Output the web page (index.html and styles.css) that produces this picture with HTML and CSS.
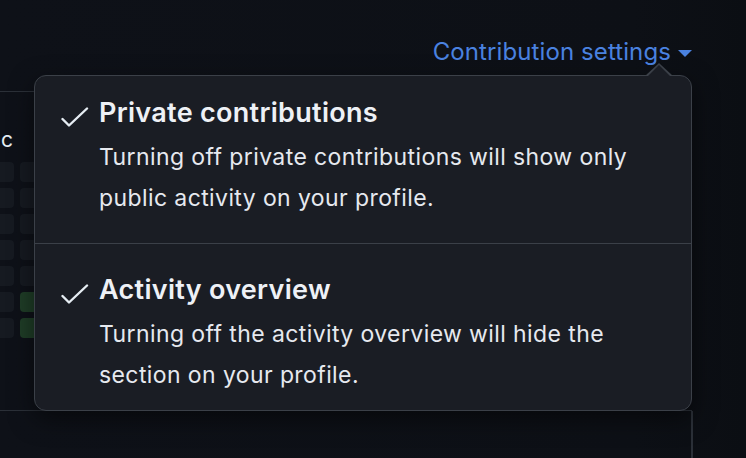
FILE: index.html
```html
<!DOCTYPE html>
<html lang="en">
<head>
<meta charset="utf-8">
<link rel="stylesheet" href="styles.css">
</head>
<body>
<div class="page">
  <div class="toolbar">
    <span class="settings-link">Contribution settings<span class="caret"></span></span>
  </div>
  <div class="graph-card">
    <div class="month">c</div>
    <div class="grid">
      <div class="col">
        <i></i><i></i><i></i><i></i><i></i><i></i><i></i>
      </div>
      <div class="col">
        <i></i><i></i><i></i><i></i><i></i><i class="g"></i><i class="g"></i>
      </div>
    </div>
  </div>
  <div class="next-card"></div>

  <div class="popover">
    <div class="item item-first">
      <svg class="check" viewBox="0 0 28 21" width="28" height="21"><path d="M1.5 12L8 18.5L26 1.5" fill="none" stroke="#e6edf3" stroke-width="2.4" stroke-linecap="round" stroke-linejoin="round"/></svg>
      <div class="item-body">
        <div class="item-title">Private contributions</div>
        <div class="item-desc">Turning off private contributions will show only public activity on your profile.</div>
      </div>
    </div>
    <div class="divider"></div>
    <div class="item item-second">
      <svg class="check" viewBox="0 0 28 21" width="28" height="21"><path d="M1.5 12L8 18.5L26 1.5" fill="none" stroke="#e6edf3" stroke-width="2.4" stroke-linecap="round" stroke-linejoin="round"/></svg>
      <div class="item-body">
        <div class="item-title">Activity overview</div>
        <div class="item-desc">Turning off the activity overview will hide the section on your profile.</div>
      </div>
    </div>
  </div>
</div>
</body>
</html>
```

FILE: styles.css
```css
* { box-sizing: border-box; }
html, body { margin: 0; height: 100%; }
body {
  background: #0d1016;
  font-family: Inter, "Noto Sans", sans-serif;
  color: #e6edf3;
  overflow: hidden;
}
.page {
  position: relative;
  width: 746px;
  height: 458px;
  background: linear-gradient(90deg, #0e1118 0%, #0d1016 85%, #0b0e13 100%);
}
.toolbar {
  height: 91px;
  display: flex;
  justify-content: flex-end;
  align-items: flex-start;
  padding: 38px 54px 0 0;
}
.settings-link {
  color: #4a82e0;
  font-size: 24px;
  line-height: 28px;
  display: flex;
  align-items: center;
  letter-spacing: 0.1px;
}
.caret {
  width: 0; height: 0;
  margin-left: 7px;
  margin-top: 2px;
  border-left: 7.5px solid transparent;
  border-right: 7.5px solid transparent;
  border-top: 7px solid #4a82e0;
}
.graph-card {
  height: 320px;
  width: 692px;
  border-top: 1.5px solid #2b3038;
  border-bottom: 1.5px solid #2b3038;
  padding: 36px 0 0 0;
  display: flex;
  flex-direction: column;
}
.month {
  font-size: 21px;
  line-height: 24px;
  color: #e6edf3;
  height: 34px;
  padding-left: 1px;
}
.grid {
  display: flex;
  gap: 6px;
  margin-left: -6px;
}
.col {
  display: flex;
  flex-direction: column;
  gap: 6px;
}
.col i {
  display: block;
  width: 20px;
  height: 20px;
  border-radius: 4px;
  background: #161a21;
}
.col i.g { background: #1f3d27; }
.next-card {
  width: 693px;
  height: 60px;
  border-right: 2px solid #2b3038;
}
.popover {
  position: absolute;
  left: 34px;
  top: 75px;
  width: 658px;
  height: 336px;
  background: #1a1d24;
  border: 1.5px solid #3b4048;
  border-radius: 12px;
  box-shadow: 0 8px 24px rgba(0,0,0,0.5);
  display: flex;
  flex-direction: column;
}
.popover::before {
  content: "";
  position: absolute;
  top: -13.5px;
  right: 18.5px;
  width: 0; height: 0;
  border-left: 14.5px solid transparent;
  border-right: 14.5px solid transparent;
  border-bottom: 13.5px solid #3b4048;
}
.popover::after {
  content: "";
  position: absolute;
  top: -11.5px;
  right: 20.5px;
  width: 0; height: 0;
  border-left: 12.5px solid transparent;
  border-right: 12.5px solid transparent;
  border-bottom: 12px solid #1a1d24;
}
.item {
  display: flex;
  gap: 10px;
  padding: 0 30px 0 26px;
}
.item-first { padding-top: 19px; padding-bottom: 23.5px; }
.item-second { padding-top: 27.5px; }
.check {
  flex: none;
  margin-top: 12px;
}
.item-title {
  font-weight: 600;
  font-size: 27px;
  line-height: 36px;
  letter-spacing: 0.3px;
  color: #eef1f6;
}
.item-desc {
  font-size: 23px;
  line-height: 41px;
  letter-spacing: 0.4px;
  color: #e6e9ef;
  margin-top: 6px;
}
.divider {
  height: 1.5px;
  background: #3b4048;
}
```
